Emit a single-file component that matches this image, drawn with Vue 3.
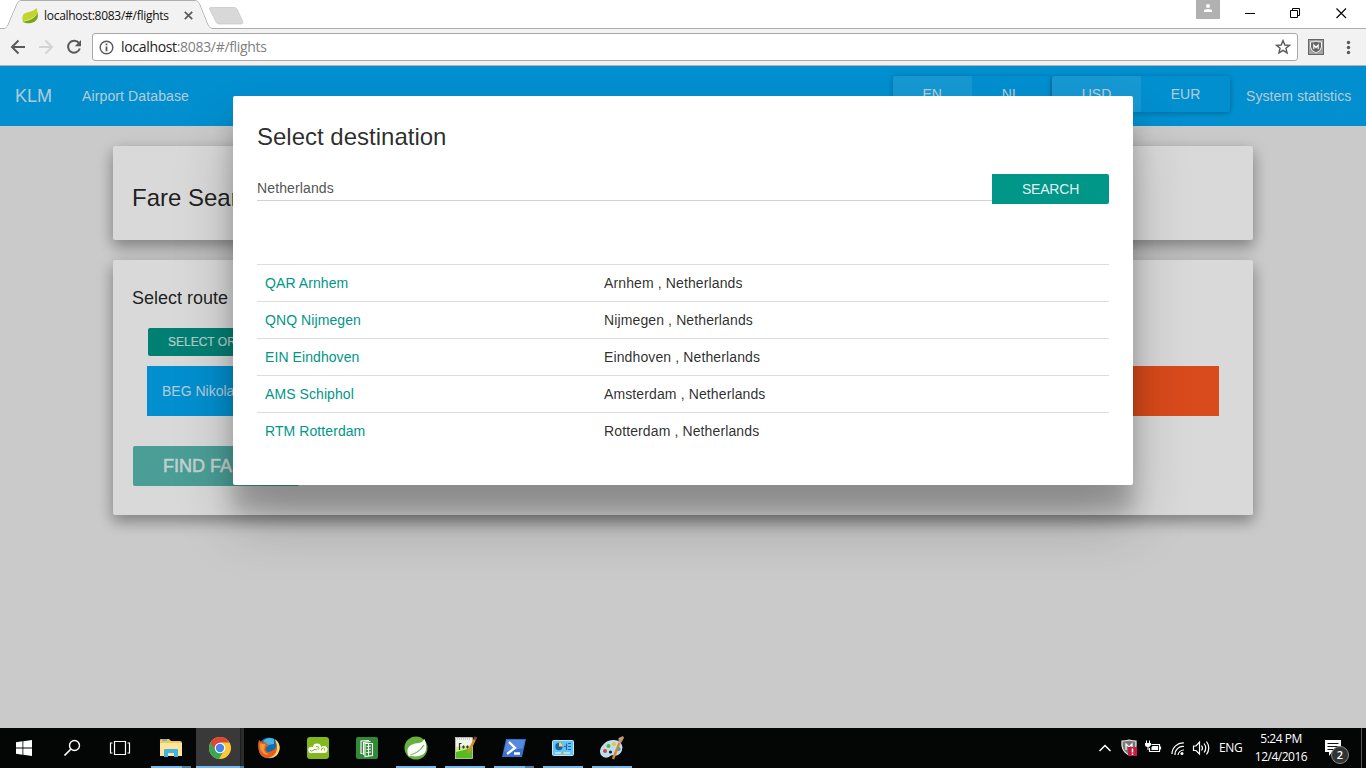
<script setup>
const airports = [
  { code: 'QAR', name: 'Arnhem', city: 'Arnhem' },
  { code: 'QNQ', name: 'Nijmegen', city: 'Nijmegen' },
  { code: 'EIN', name: 'Eindhoven', city: 'Eindhoven' },
  { code: 'AMS', name: 'Schiphol', city: 'Amsterdam' },
  { code: 'RTM', name: 'Rotterdam', city: 'Rotterdam' },
]
</script>

<template>
  <div class="screen">
    <header class="tabstrip">
      <svg class="tab-shape" width="1366" height="29" viewBox="0 0 1366 29">
        <path d="M0 28.5H4C6 28.5 7 27 8 25L17 4Q18.5.5 21 .5H195Q198 .5 199.500 4L208 25Q209.500 28.500 212 28.500H1366" fill="none" stroke="#aeaeae" />
        <path d="M5 29Q7 28 8.500 25L17.500 4Q19 1 21 1H195Q198 1 199 4L207.500 25Q209 28 212 29Z" fill="#f2f2f2" />
        <path d="M211 7.500H234Q236 7.500 237 9L243 22Q243 24 241 24H219Q217 24 216 22L209.500 9Q209 7.500 211 7.500Z" fill="#d8d8d8" stroke="#c5c5c5" stroke-width=".7" />
      </svg>
      <div class="tab">
        <svg width="18" height="18" viewBox="0 0 18 18">
          <path d="M15.500 1C17.500 7 17.500 12 13 14.500C9 16.500 4 16 2 15C.5 9 2 6.500 6 5.500C10 4.500 13 4 15.500 1Z" fill="#c1d52b" />
          <path d="M2 14.500C8 13.500 13 12 16.500 6C17.500 10 16.500 13 13 15C9 17 4 16.500 2 14.500Z" fill="#7aa51a" />
          <path d="M3 14C8 13 12 12 15.500 7.500" fill="none" stroke="#e9edb0" stroke-width=".8" />
        </svg>
        <span class="tab-title">localhost:8083/#/flights</span>
        <svg class="tab-close" width="9" height="9" viewBox="0 0 9 9"><path d="M.8.8 8.200 8.200M8.200.8.8 8.200" stroke="#5a5a5a" stroke-width="1.700" /></svg>
      </div>
      <div class="window-controls">
        <span class="profile">
          <svg width="24" height="19" viewBox="0 0 24 19"><circle cx="12" cy="6" r="2" fill="#fff" /><path d="M8 12V10.500Q8 9 12 9T16 10.500V12Z" fill="#fff" /></svg>
        </span>
        <svg width="146" height="28" viewBox="0 0 146 28" fill="none" stroke="#000">
          <path d="M25 13.500H35M70.500 10.500H77.500V17.500H70.500ZM72.500 10.500V8.500H79.500V15.500H77.500" />
          <path d="M116.500 8.500 126 18M126 8.500 116.500 18" stroke-width="1.100" />
        </svg>
      </div>
    </header>

    <div class="toolbar">
      <svg class="nav-icons" width="92" height="36" viewBox="0 29 92 36" fill="none" stroke="#5a5a5a" stroke-width="2">
        <path d="M25 47H12M18.500 40.500 12 47 18.500 53.500" />
        <path d="M39 47H52M45.500 40.500 52 47 45.500 53.500" stroke="#d3d3d3" />
        <path d="M79 43.200A6 6 0 1 0 79.800 48.500" />
        <path d="M81 40V46.200H74.800Z" fill="#5a5a5a" stroke="none" />
      </svg>
      <div class="address">
        <svg width="15" height="15" viewBox="0 0 15 15"><circle cx="7.500" cy="7.500" r="6.300" fill="none" stroke="#5a5a5a" stroke-width="1.400" /><path d="M6.600 6.500H8.400V11.300H6.600ZM6.600 3.600H8.400V5.300H6.600Z" fill="#5a5a5a" /></svg>
        <span class="url"><b>localhost</b>:8083/#/flights</span>
        <svg class="star" width="16" height="16" viewBox="0 0 16 16"><path d="M8 1.600 9.800 6 14.500 6.300 10.900 9.300 12.100 13.900 8 11.400 3.900 13.900 5.100 9.300 1.500 6.300 6.200 6Z" fill="none" stroke="#5a5a5a" stroke-width="1.400" /></svg>
      </div>
      <svg width="68" height="36" viewBox="1298 29 68 36">
        <rect x="1308.500" y="39.500" width="15" height="15" fill="#a2a2a2" stroke="#666" />
        <path d="M1310.500 42Q1315 42 1316 41Q1317 42 1321.500 42V47Q1321 51 1316 53Q1311 51 1310.500 47Z" fill="#666" stroke="#f3f3f3" />
        <path d="M1313.800 49V45L1316 47.500 1318.200 45V49" fill="none" stroke="#fff" stroke-width="1.200" />
        <g fill="#5a5a5a"><circle cx="1348.500" cy="42.500" r="1.700" /><circle cx="1348.500" cy="47.500" r="1.700" /><circle cx="1348.500" cy="52.500" r="1.700" /></g>
      </svg>
    </div>

    <main class="page">
      <nav class="navbar">
        <span class="brand">KLM</span>
        <span class="nav-link">Airport Database</span>
        <div class="btn-group lang"><span class="active">EN</span><span>NL</span></div>
        <div class="btn-group currency"><span class="active">USD</span><span>EUR</span></div>
        <span class="nav-link stats">System statistics</span>
      </nav>
      <div class="container">
        <section class="card heading"><h1>Fare Search</h1></section>
        <section class="card route">
          <h2>Select route</h2>
          <span class="btn-origin">SELECT ORIGIN</span>
          <div class="legs"><div class="origin">BEG Nikola Tesla</div><div class="destination"></div></div>
          <span class="btn-find">FIND FARES</span>
        </section>
      </div>
      <div class="backdrop"></div>
      <div class="modal">
        <h3>Select destination</h3>
        <div class="search-row">
          <div class="field">Netherlands</div>
          <span class="btn-search">SEARCH</span>
        </div>
        <div class="results">
          <div v-for="a in airports" :key="a.code" class="row">
            <span class="code">{{ a.code }} {{ a.name }}</span>
            <span>{{ a.city }} , Netherlands</span>
          </div>
        </div>
      </div>
    </main>

    <footer class="taskbar">
      <div class="cell sys"><svg width="16" height="16" viewBox="0 0 16 16" fill="#fff"><path d="M0 2.300 6.500 1.300V7.500H0ZM7.300 1.200 16 0V7.500H7.300ZM0 8.400H6.500V14.700L0 13.700ZM7.300 8.400H16V16L7.300 14.800Z" /></svg></div>
      <div class="cell sys"><svg width="18" height="18" viewBox="0 0 18 18" fill="none" stroke="#fff"><circle cx="11.500" cy="6.500" r="5" stroke-width="1.400" /><path d="M8 10 1.500 16.500" stroke-width="1.700" /></svg></div>
      <div class="cell sys"><svg width="22" height="16" viewBox="0 0 22 16" fill="none" stroke="#fff" stroke-width="1.200"><path d="M5.500 1.500H16.500V14.500H5.500ZM3.500 3H1.500V13H3.500M18.500 3H20.500V13H18.500" /></svg></div>

      <div class="cell app first open stacked">
        <svg width="24" height="24" viewBox="0 0 24 24"><path d="M1 4Q1 3 2 3H10L12 5H21Q23 5 23 7V20H1Z" fill="#f1c95c" /><path d="M1 7H23V20H1Z" fill="#ffe49a" /><path d="M3 4H8" stroke="#45b2e4" stroke-width="1.500" /><path d="M5 21V14Q5 13 6 13H18Q19 13 19 14V21H15V17H9V21Z" fill="#3fb3e6" /></svg>
      </div>
      <div class="cell app current">
        <svg width="24" height="24" viewBox="0 0 24 24"><circle cx="12" cy="12" r="11" fill="#fac937" /><path d="M12 12 2.500 6.500A11 11 0 0 0 11 23L16 14.500Z" fill="#39a856" /><path d="M2.500 6.500A11 11 0 0 1 21.500 6.500H12L7 14Z" fill="#df4636" /><circle cx="12" cy="12" r="5.300" fill="#fff" /><circle cx="12" cy="12" r="4.200" fill="#4385f5" /></svg>
      </div>
      <div class="cell app">
        <svg width="24" height="24" viewBox="0 0 24 24"><circle cx="12" cy="12" r="10.500" fill="#1769ae" /><path d="M6 5Q11 0 17 3L17 8 11 9Z" fill="#48b5df" /><path d="M18 3Q24 8 22.500 14 20 23 11 22L18 17 20 10Z" fill="#ffd65a" /><path d="M2 4 5 6.500 9 6 9 8 12 9.500 9 11.500Q7.500 15 11 16 14 16 17 13.500 20 11 19 7 22 15 16 20 7 25 2.500 17 0 10 2 4Z" fill="#e0601f" /><path d="M3.500 7 5 8 8.500 8 7.500 11Q6 17 12 18 8 20 5 16 2 12 3.500 7Z" fill="#f39a2e" /></svg>
      </div>
      <div class="cell app">
        <svg width="24" height="24" viewBox="0 0 24 24"><rect x="1" y="1" width="22" height="22" rx="3" fill="#82b81b" /><g fill="#fff"><circle cx="5.500" cy="14" r="3.200" /><circle cx="11" cy="11.500" r="4" /><circle cx="18" cy="13.500" r="3.500" /><path d="M5 13H18V17H5Z" /></g><path d="M4 14Q5 16 7 14.500 9 12 11 14M10 10.500Q13 10 13 12.500 12.500 14 11.500 13M15.500 14.500Q15 12 17.500 12 19.500 12.500 18.500 14.500" fill="none" stroke="#82b81b" stroke-width="1" /></svg>
      </div>
      <div class="cell app">
        <svg width="24" height="24" viewBox="0 0 24 24"><rect x="1" y="1" width="22" height="22" rx="2" fill="#318b36" /><path d="M7.500 17.500H6V5L14 4.500M8.500 19V6.500L15.500 5.500M10 7.500H17.500V19.500L10 20.500Z" fill="none" stroke="#fff" stroke-width="1.100" /><path d="M11.500 10.500 16 10M11.500 13.500 16 13M11.500 16.500 16 16M13.500 8V20" stroke="#fff" stroke-width="1" /></svg>
      </div>
      <div class="cell app open">
        <svg width="24" height="24" viewBox="0 0 24 24"><circle cx="12" cy="12" r="11.500" fill="#68b13e" /><path d="M20.500 3Q25 15 18 19 11 22 4 18.500Q2 12 7 9 11 7 15 7 19 6 20.500 3Z" fill="#fff" /><path d="M5 19Q14 18 20 9" fill="none" stroke="#68b13e" stroke-width="1.200" /><circle cx="5.500" cy="19" r="1.200" fill="#fff" /></svg>
      </div>
      <div class="cell app open">
        <svg width="24" height="24" viewBox="0 0 24 24"><path d="M2 1H19V23H2Z" fill="#f3f3ee" /><path d="M3 11 19 9V22H3Z" fill="#c9ee8a" /><path d="M3 16 19 12V22H3Z" fill="#56bb1f" /><path d="M2.500 1.500H19.500V22.500H2.500Z" fill="none" stroke="#b5b5ac" /><path d="M4 3H18" stroke="#aaa" stroke-dasharray="1 1" /><path d="M6.500 14V7.500H8.500M10.500 9.500V12.500M9 11H12M14.500 9.500V12.500M13 11H16" fill="none" stroke="#333" stroke-width="1.200" /><path d="M22 3 15 17" stroke="#d49123" stroke-width="2.500" /><path d="M21.500 4 23 1" stroke="#943d38" stroke-width="2.800" /></svg>
      </div>
      <div class="cell app open stacked">
        <svg width="24" height="24" viewBox="0 0 24 24"><path d="M4 3H24L20 21H0Z" fill="#3970cc" /><path d="M5 4H23L21 12 2 16Z" fill="#5689df" /><path d="M7 6 13 12 5 18M12 17.500H18" fill="none" stroke="#fff" stroke-width="2.300" /></svg>
      </div>
      <div class="cell app open">
        <svg width="24" height="24" viewBox="0 0 24 24"><rect x="1.500" y="4.500" width="21" height="15" rx="1" fill="#63c4f3" stroke="#b9e9fb" /><circle cx="8" cy="10.500" r="3.700" fill="#1762a4" /><path d="M8 10.500V6.800A3.700 3.700 0 0 1 11.700 10.500Z" fill="#ffd36b" /><path d="M13 10.500H15M15.500 7.500V14M17 7.500H20M17 10.500H20M17 13.500H20" fill="none" stroke="#176bac" stroke-width="1.200" /><path d="M4 17H10M12 17H19" stroke="#fff" stroke-width="1.200" /><path d="M11.500 16V18" stroke="#ef971e" stroke-width="2" /></svg>
      </div>
      <div class="cell app open">
        <svg width="26" height="26" viewBox="0 0 26 26"><path d="M3 11Q8 4 15 5 22 5 23.500 12 23 20 16 21 12 19 10 22 5 24 2 20-.5 15 3 11Z" fill="#bcdff0" /><circle cx="6" cy="16" r="2" fill="#de4238" /><circle cx="9.500" cy="11" r="2" fill="#55b735" /><circle cx="15" cy="9" r="2" fill="#f5bf31" /><circle cx="19.500" cy="14" r="2" fill="#5389c1" /><circle cx="11.500" cy="17" r="1.600" fill="#152838" /><path d="M14 24 20.500 8" stroke="#d88638" stroke-width="2.500" /><path d="M19.500 7 19.500 3 24 1 25 3 22 8Z" fill="#c2986f" /></svg>
      </div>

      <div class="tray">
        <svg class="tray-icons" width="120" height="40" viewBox="1095 0 120 40" fill="none" stroke="#fff" stroke-width="1.200">
          <path d="M1099.500 23 1105 17.500 1110.500 23" stroke-width="1.500" />
          <path d="M1122 13Q1126 13 1129 12 1132 13 1136 13V18Q1135 24 1129 27 1123 24 1122 18Z" fill="#777" stroke="#eee" />
          <path d="M1126 22V16L1129 19 1132 16V19" />
          <path d="M1128 19H1137V28H1128Z" fill="#c61d3e" stroke="none" /><path d="M1132.500 20.500V24.500M1132.500 25.500V27" stroke-width="1.500" />
          <path d="M1151.500 16.500H1159.500V23.500H1149.500V20" /><path d="M1152.500 18H1158V22H1151.500V19.500Z" fill="#fff" stroke="none" /><path d="M1160.500 18.500V21.500" /><path d="M1146.500 12.500V15M1149.500 12.500V15" stroke-width="1" /><path d="M1145 15H1151V17Q1150 19 1148.500 19V22H1147.500V19Q1145 19 1145 17Z" fill="#fff" stroke="none" />
          <path d="M1172 26A11 11 0 0 1 1184 15M1175 27A8 8 0 0 1 1184 18.500M1178 27A6 6 0 0 1 1184 22" /><circle cx="1182" cy="25.500" r="1.500" fill="#fff" stroke="none" />
          <path d="M1193.500 18H1196L1199.500 14V26L1196 22.500H1193.500ZM1201.500 17.500Q1203.500 20 1201.500 22.500M1204 15.500Q1207.500 20 1204 24.500M1206.500 13.500Q1211 20 1206.500 26.500" />
        </svg>
        <span class="lang-code">ENG</span>
        <div class="clock"><span>5:24 PM</span><span>12/4/2016</span></div>
        <div class="notice">
          <svg width="18" height="18" viewBox="0 0 18 18"><path d="M1 1H17V13H8L5 17V13H1Z" fill="#fff" /><path d="M3.500 4.500H14.500M3.500 7.500H14.500M3.500 10.500H10" stroke="#111" /></svg>
          <span class="badge">2</span>
        </div>
        <span class="desktop-edge"></span>
      </div>
    </footer>
  </div>
</template>

<style>
html, body { margin: 0; overflow: hidden; }
</style>

<style scoped>
* { box-sizing: border-box; }
svg { display: block; flex: none; }
.screen { width: 1366px; height: 768px; display: flex; flex-direction: column; overflow: hidden; background: #eee; font: 14px/20px "Liberation Sans", Arial, sans-serif; }
.tabstrip { position: relative; height: 29px; flex: none; display: flex; justify-content: space-between; background: #fff; }
.tab-shape { position: absolute; left: 0; top: 0; }
.tab { position: relative; display: flex; align-items: center; padding: 2px 0 0 21px; height: 29px; width: 200px; }
.tab-title { margin-left: 5px; width: 126px; font: 12px/16px "Open Sans", sans-serif; letter-spacing: -.28px; color: #111; white-space: nowrap; }
.tab-close { margin-left: 14px; }
.window-controls { position: relative; display: flex; }
.profile { width: 24px; height: 19px; background: #b1b1b1; }
.toolbar { height: 37px; flex: none; display: flex; background: #f2f2f2; border-bottom: 1px solid #b2b0b0; }
.address { width: 1206px; height: 28px; margin-top: 4px; padding: 0 6px; display: flex; align-items: center; background: #fff; border: 1px solid #a9a9a9; border-radius: 3px; }
.url { margin-left: 7px; font: 14px/20px "Open Sans", sans-serif; letter-spacing: -.32px; color: #808080; white-space: nowrap; }
.url b { font-weight: 400; color: #222; }
.star { margin-left: auto; }
.page { position: relative; flex: 1; min-height: 0; overflow: hidden; background: #eee; }
.navbar { height: 60px; display: flex; align-items: center; padding: 0 15px; background: #03a9f4; color: rgba(255,255,255,.84); }
.brand { width: 67px; font-size: 18px; }
.nav-link { white-space: nowrap; letter-spacing: .12px; }
.btn-group { display: flex; height: 36px; margin-bottom: 4px; border-radius: 2px; overflow: hidden; box-shadow: 0 1px 6px rgba(0,0,0,.2), 0 1px 4px rgba(0,0,0,.1); }
.btn-group span { flex: 1; text-align: center; line-height: 36px; }
.btn-group .active { background: #1ab3f8; }
.lang { width: 157px; margin-left: auto; }
.currency { width: 178px; margin-left: 2px; }
.stats { width: 105px; margin-left: 16px; letter-spacing: .06px; }
.container { width: 1140px; margin: 20px auto 0; }
.card { background: #fff; border-radius: 2px; box-shadow: 0 7px 14px rgba(0,0,0,.21), 0 5px 17px rgba(0,0,0,.2); color: rgba(0,0,0,.87); }
h1, h2, h3 { margin: 0; font-weight: 400; }
.heading { height: 94px; padding: 36px 19px 0; }
h1 { font-size: 24px; line-height: 32px; }
.route { height: 255px; margin-top: 20px; padding: 28px 19px 0; display: flex; flex-direction: column; align-items: flex-start; }
h2 { font-size: 18px; line-height: 20px; }
.btn-origin { margin: 20px 0 0 16px; padding: 0 20px; height: 28px; line-height: 28px; font-size: 12px; border-radius: 2px; background: #009688; color: rgba(255,255,255,.84); -webkit-text-stroke: .2px; }
.legs { display: grid; grid-template-columns: 536px 536px; margin: 10px 0 0 15px; height: 50px; line-height: 50px; color: rgba(255,255,255,.84); }
.origin { padding-left: 15px; background: #03a9f4; }
.destination { background: #ff5722; }
.btn-find { width: 166px; height: 40px; margin: 30px 0 0 1px; padding-left: 30px; font-size: 18px; font-weight: 500; line-height: 40px; border-radius: 2px; background: #009688; color: rgba(255,255,255,.84); opacity: .65; -webkit-text-stroke: .5px; white-space: nowrap; }
.backdrop { position: absolute; inset: 0; background: rgba(0,0,0,.15); }
.modal { position: absolute; left: 233px; top: 30px; width: 900px; height: 389px; padding: 24px; background: #fff; border-radius: 2px; color: rgba(0,0,0,.84); box-shadow: 0 27px 21px rgba(0,0,0,.2), 0 38px 58px rgba(0,0,0,.22); }
h3 { font-size: 24px; line-height: 34px; }
.search-row { display: flex; height: 30px; margin-top: 20px; }
.field { flex: 1; height: 27px; line-height: 28px; border-bottom: 1px solid #d2d2d2; color: #555; letter-spacing: .13px; }
.btn-search { width: 117px; line-height: 30px; text-align: center; background: #009688; color: rgba(255,255,255,.9); border-radius: 0 2px 2px 0; letter-spacing: -.2px; }
.results { margin-top: 60px; letter-spacing: .12px; }
.row { display: grid; grid-template-columns: 339px 1fr; height: 37px; border-top: 1px solid #ddd; line-height: 36px; }
.row span { padding-left: 8px; }
.row .code { color: #009688; letter-spacing: .08px; }
.taskbar { height: 40px; flex: none; display: flex; background: #040505; color: #fff; font-family: "Open Sans", sans-serif; }
.cell { position: relative; height: 40px; display: flex; align-items: center; justify-content: center; }
.sys { width: 48px; }
.app { width: 49px; }
.first { margin-left: 2px; }
.open::after { content: ""; position: absolute; left: 5px; bottom: 0; width: 40px; height: 2px; background: #76b9ed; }
.stacked::after { background: linear-gradient(90deg, #76b9ed 31px, #5080a5 31px); }
.current { background: linear-gradient(90deg, transparent 1px, #393939 1px 45px, #1d1d1d 45px 46px, #2b2b2b 46px); }
.current::after { content: ""; position: absolute; left: 1px; right: 0; bottom: 0; height: 2px; background: linear-gradient(90deg, #76b9ed 44px, #5080a5 44px); }
.tray { margin-left: auto; width: 271px; display: flex; align-items: center; }
.lang-code { width: 27px; margin-left: 4px; font-size: 12px; letter-spacing: -.3px; }
.clock { width: 64px; margin-left: 3px; display: flex; flex-direction: column; align-items: center; font-size: 12px; line-height: 18px; letter-spacing: -.5px; white-space: nowrap; }
.notice { position: relative; margin-left: 11px; }
.badge { position: absolute; left: 7px; top: 7px; width: 18px; height: 18px; border-radius: 50%; background: #333; border: 1px solid #888; font-size: 11px; font-weight: 600; line-height: 16px; text-align: center; }
.desktop-edge { margin-left: auto; margin-right: 4px; width: 1px; height: 40px; background: #555; }
</style>
